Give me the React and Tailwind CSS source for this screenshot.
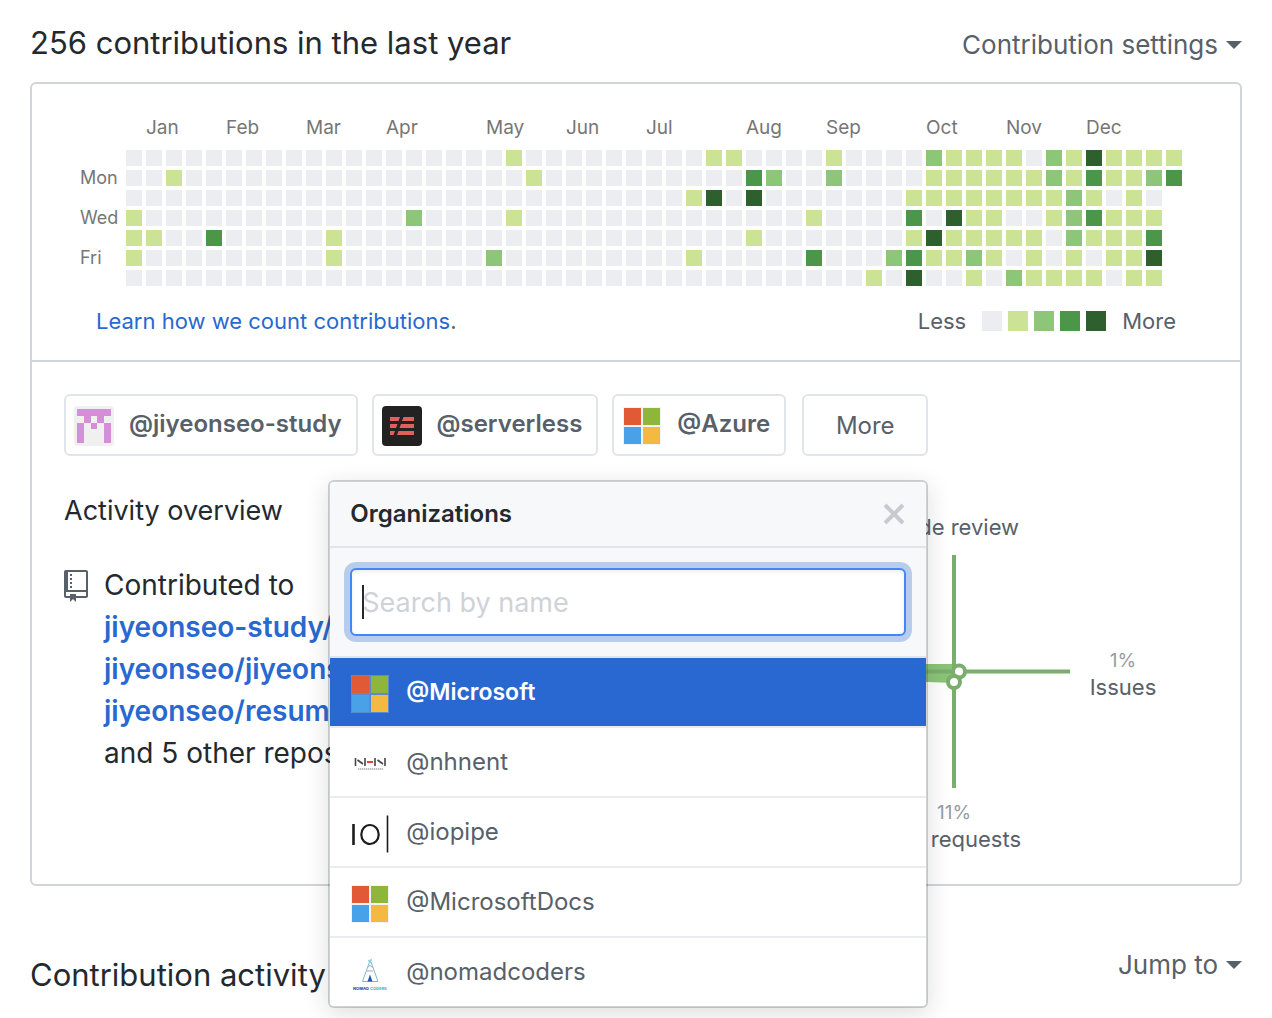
import React from "react";

const LEVELS = [
  "bg-[#ebedf0]",
  "bg-[#cce295]",
  "bg-[#8dc679]",
  "bg-[#4b9648]",
  "bg-[#2e602e]",
];

const MONTHS = [
  ["Jan", 1],
  ["Feb", 5],
  ["Mar", 9],
  ["Apr", 13],
  ["May", 18],
  ["Jun", 22],
  ["Jul", 26],
  ["Aug", 31],
  ["Sep", 35],
  ["Oct", 40],
  ["Nov", 44],
  ["Dec", 48],
];

const DAYS = ["", "Mon", "", "Wed", "", "Fri", ""];

/* Sparse levels for the first 37 weeks, then one digit per remaining week. */
const ROWS = [
  [{ 19: 1, 29: 1, 30: 1, 35: 1 }, "0002111102141111"],
  [{ 2: 1, 20: 1, 31: 3, 32: 2, 35: 2 }, "0001111112131123"],
  [{ 28: 1, 29: 4, 31: 4 }, "001111111121010"],
  [{ 0: 1, 14: 2, 19: 1, 34: 1 }, "003041100123111"],
  [{ 0: 1, 1: 1, 4: 3, 10: 1, 31: 1 }, "001411111021113"],
  [{ 0: 1, 10: 1, 18: 2, 28: 1, 34: 3 }, "023112101010114"],
  [{}, "104001021111011"],
];

const weeksOf = ([sparse, tail]) => [
  ...Array.from({ length: 37 }, (_, i) => sparse[i] || 0),
  ...tail.split("").map(Number),
];

function Caret() {
  return (
    <span className="border-x-8 border-t-8 border-x-transparent border-t-[#586069]" />
  );
}

function MicrosoftLogo() {
  return (
    <svg viewBox="0 0 40 40" className="size-10 shrink-0" aria-hidden="true">
      <rect x="1" y="1" width="38" height="38" fill="#d8d8d8" opacity="0.3" />
      <rect x="2" y="2" width="17" height="17" fill="#e05a35" />
      <rect x="21" y="2" width="17" height="17" fill="#8db63a" />
      <rect x="2" y="21" width="17" height="17" fill="#49a2e8" />
      <rect x="21" y="21" width="17" height="17" fill="#f4b940" />
    </svg>
  );
}

function IdenticonLogo() {
  return (
    <svg viewBox="0 0 40 40" className="size-10 shrink-0 rounded" aria-hidden="true">
      <rect width="40" height="40" fill="#f0f0f0" />
      <path
        fill="#d58fd8"
        d="M3 3h34v7h-7v7h-7v6h-6v-6h-7v-7H3zM3 17h7v20H3zM30 17h7v20h-7z"
      />
      <path fill="#f0f0f0" d="M17 10h6v7h-6z" />
    </svg>
  );
}

function ServerlessLogo() {
  return (
    <svg viewBox="0 0 40 40" className="size-10 shrink-0 rounded" aria-hidden="true">
      <rect width="40" height="40" fill="#222222" />
      <g fill="#e2605a">
        <path d="M8 11h10l-1.500 4H8zM21.500 11H32v4H20z" />
        <path d="M8 18h7.500l-1.500 4H8zM19 18h13v4H17.500z" />
        <path d="M8 25h5l-1.500 4H8zM16.500 25H32v4H15z" />
      </g>
    </svg>
  );
}

function NhnLogo() {
  return (
    <svg viewBox="0 0 40 40" className="size-10 shrink-0" aria-hidden="true">
      <g fill="none" stroke="#444" strokeWidth="1.600">
        <path d="M5.500 14v8M15 14v8M25 14v8M35 14v8" />
        <path d="M7.500 16l5.500 4M27.500 16l5.500 4" strokeWidth="1.600" />
      </g>
      <path d="M17 18h6" stroke="#ee4036" strokeWidth="2" />
      <path d="M8 25h25" stroke="#aaa" strokeWidth="1.400" strokeDasharray="1.400 0.600" />
    </svg>
  );
}

function IopipeLogo() {
  return (
    <svg viewBox="0 0 40 40" className="size-10 shrink-0" aria-hidden="true">
      <g fill="none" stroke="#1c1c1c">
        <path d="M3.500 10v21" strokeWidth="2.600" />
        <ellipse cx="20" cy="20.500" rx="8.700" ry="9.500" strokeWidth="2.200" />
        <path d="M37.500 1.500v37" strokeWidth="1.600" />
      </g>
    </svg>
  );
}

function NomadLogo() {
  return (
    <svg viewBox="0 0 40 40" className="size-10 shrink-0" aria-hidden="true">
      <g fill="none" stroke="#8fb0c4" strokeWidth="1">
        <path d="M19.500 8l-7 19.500h15.500l-7-19.500" />
        <path d="M17.500 13.500l2.500-2 2.500 2" />
        <path d="M17 17h6" />
      </g>
      <path d="M18.500 6l2 3M21.500 5l-2 4" stroke="#7fd0e6" strokeWidth="1.400" />
      <path d="M20 20.500l2.500 7h-5z" fill="#2a55a8" />
      <text
        x="3"
        y="36"
        fontSize="4"
        fontWeight="800"
        fontFamily="Inter, sans-serif"
        fill="#2a55a0"
      >
        NOMAD
      </text>
      <text
        x="20"
        y="36"
        fontSize="4"
        fontWeight="800"
        fontFamily="Inter, sans-serif"
        fill="#4fb3d2"
      >
        CODERS
      </text>
    </svg>
  );
}

function RepoIcon() {
  return (
    <svg viewBox="0 0 12 16" className="h-8 w-6 shrink-0 fill-[#586069]" aria-hidden="true">
      <path
        fillRule="evenodd"
        d="M4 9H3V8h1v1zm0-3H3v1h1V6zm0-2H3v1h1V4zm0-2H3v1h1V2zm8-1v12c0 .55-.45 1-1 1H6v2l-1.500-1.500L3 16v-2H1c-.55 0-1-.45-1-1V1c0-.55.45-1 1-1h10c.55 0 1 .45 1 1zm-1 10H1v2h2v-1h3v1h5v-2zm0-10H2v9h9V1z"
      />
    </svg>
  );
}

function Calendar() {
  return (
    <div className="grid grid-cols-[30px_1fr] gap-x-4 text-[#767676]">
      <div />
      <div className="grid h-9 grid-cols-[repeat(53,16px)] gap-x-1 text-[19px] leading-7">
        {MONTHS.map(([name, week]) => (
          <span key={name} className="w-0" style={{ gridColumnStart: week + 1 }}>
            {name}
          </span>
        ))}
      </div>
      <div className="grid grid-rows-[repeat(7,16px)] gap-y-1 text-lg leading-4">
        {DAYS.map((day, i) => (
          <span key={i}>{day}</span>
        ))}
      </div>
      <div className="flex flex-col gap-1">
        {ROWS.map((row, i) => (
          <div key={i} className="flex gap-1">
            {weeksOf(row).map((level, week) => (
              <span key={week} className={`size-4 shrink-0 ${LEVELS[level]}`} />
            ))}
          </div>
        ))}
      </div>
    </div>
  );
}

function OrgButton({ logo, name }) {
  return (
    <button
      type="button"
      className="flex h-[62px] items-center gap-[15px] rounded-md border-2 border-[#e1e4e8] bg-white pt-0.5 pr-[14px] pl-2 text-2xl font-semibold"
    >
      {logo}
      <span className="pb-1">{name}</span>
    </button>
  );
}

const ORGS = [
  ["@Microsoft", MicrosoftLogo],
  ["@nhnent", NhnLogo],
  ["@iopipe", IopipeLogo],
  ["@MicrosoftDocs", MicrosoftLogo],
  ["@nomadcoders", NomadLogo],
];

function OrganizationsMenu() {
  return (
    <div
      role="dialog"
      aria-label="Organizations"
      className="absolute top-[86px] right-0 w-[600px] overflow-hidden rounded-md border-2 border-[#1b1f23]/20 bg-white bg-clip-padding shadow-[0_6px_24px_rgba(27,31,35,0.15)]"
    >
      <header className="flex h-[66px] items-center justify-between border-b-2 border-[#e1e4e8] bg-[#f6f8fa] px-5">
        <h3 className="text-2xl font-semibold text-[#24292e]">Organizations</h3>
        <button type="button" aria-label="Close">
          <svg viewBox="0 0 24 24" className="size-6" aria-hidden="true">
            <path d="M3 3l18 18M21 3L3 21" stroke="#c6cbd1" strokeWidth="4" />
          </svg>
        </button>
      </header>
      <div className="border-b-2 border-[#e1e4e8] bg-[#f6f8fa] p-5">
        <div className="relative flex items-center">
          <input
            type="text"
            aria-label="Search by name"
            placeholder="Search by name"
            className="h-[68px] w-full rounded-md border-2 border-[#4287f5] bg-white px-[10px] text-[27px] caret-transparent shadow-[inset_0_2px_4px_rgba(27,31,35,0.075),0_0_0_6px_#b8ccee] outline-none placeholder:text-[#cfd2d7]"
          />
          <span className="absolute left-3 h-[34px] w-[2px] bg-[#24292e]" />
        </div>
      </div>
      <ul className="divide-y-2 divide-[#eaecef]">
        {ORGS.map(([name, Logo], i) => (
          <li key={name}>
            <button
              type="button"
              className={
                i === 0
                  ? "flex w-full gap-4 bg-[#2968d0] px-5 pt-4 pb-3 text-left text-[23px] leading-9 font-semibold text-white"
                  : "flex w-full gap-4 bg-white px-5 pt-4 pb-3 text-left text-2xl leading-9 text-[#586069]"
              }
            >
              <Logo />
              {name}
            </button>
          </li>
        ))}
      </ul>
    </div>
  );
}

function ActivityChart() {
  return (
    <svg
      viewBox="0 0 508 372"
      className="h-[372px] w-[508px] shrink-0"
      fontFamily="Inter, sans-serif"
      textAnchor="middle"
      role="img"
      aria-label="Code review, 1% issues, 11% pull requests"
    >
      <path d="M150 171H256L262 179L254 190L150 186Z" fill="#8bc477" />
      <path d="M138 178.500H370M254 62V295" stroke="#7bae6d" strokeWidth="4" />
      <g fill="#fff" stroke="#7bae6d" strokeWidth="4">
        <circle cx="259" cy="178.500" r="6" />
        <circle cx="254" cy="189" r="6" />
      </g>
      <g fill="#586069" fontSize="22">
        <text x="254" y="42">Code review</text>
        <text x="423" y="202">Issues</text>
        <text x="254" y="354">Pull requests</text>
      </g>
      <g fill="#959da5" fontSize="19">
        <text x="423" y="174">1%</text>
        <text x="254" y="326">11%</text>
      </g>
    </svg>
  );
}

export default function App() {
  return (
    <main className="bg-white px-[30px] pt-5 pb-5 font-[Inter,sans-serif] text-[#586069]">
      <div className="flex h-[62px] items-start justify-between">
        <h2 className="text-[31px] leading-[46px] text-[#24292e]">
          256 contributions in the last year
        </h2>
        <button type="button" className="flex items-center gap-2 text-[26px] leading-[50px]">
          Contribution settings
          <Caret />
        </button>
      </div>

      <div className="rounded-md border-2 border-[#d1d5da]">
        <section className="border-b-2 border-[#d1d5da] px-12 pt-[30px]">
          <Calendar />
          <div className="flex h-[74px] items-center justify-between pr-4 pb-1 pl-4 text-[22px]">
            <p>
              <a href="#count" className="text-[#2968d0]">
                Learn how we count contributions
              </a>
              .
            </p>
            <div className="flex items-center gap-4">
              Less
              <ul className="flex gap-[6px]">
                {LEVELS.map((level) => (
                  <li key={level} className={`size-5 ${level}`} />
                ))}
              </ul>
              More
            </div>
          </div>
        </section>

        <section className="h-[522px] px-8 pt-8">
          <nav className="flex items-start gap-[14px]">
            <OrgButton logo={<IdenticonLogo />} name="@jiyeonseo-study" />
            <OrgButton logo={<ServerlessLogo />} name="@serverless" />
            <OrgButton logo={<MicrosoftLogo />} name="@Azure" />
            <div className="relative z-10 ml-0.5">
              <button
                type="button"
                className="h-[62px] w-[126px] rounded-md border-2 border-[#e1e4e8] bg-white pt-0.5 text-2xl"
              >
                More
              </button>
              <OrganizationsMenu />
            </div>
          </nav>

          <div className="flex justify-between pt-[37px] text-[#24292e]">
            <div className="shrink-0">
              <h3 className="text-[27px] leading-9">Activity overview</h3>
              <div className="flex gap-4 pt-[35px]">
                <div className="pt-1.5">
                  <RepoIcon />
                </div>
                <div className="w-64 text-[28px] leading-[42px] whitespace-nowrap">
                  Contributed to
                  <ul className="font-semibold text-[#2968d0]">
                    <li>
                      <a href="#study">jiyeonseo-study/</a>
                    </li>
                    <li>
                      <a href="#blog">jiyeonseo/jiyeonseo</a>
                    </li>
                    <li>
                      <a href="#resume">jiyeonseo/resume</a>
                    </li>
                  </ul>
                  and 5 other repositories
                </div>
              </div>
            </div>
            <ActivityChart />
          </div>
        </section>
      </div>

      <div className="flex items-start justify-between pt-[54px]">
        <h2 className="text-[31px] leading-[70px] text-[#24292e]">Contribution activity</h2>
        <button type="button" className="flex items-center gap-2 text-[26px] leading-[50px]">
          Jump to
          <Caret />
        </button>
      </div>
    </main>
  );
}
